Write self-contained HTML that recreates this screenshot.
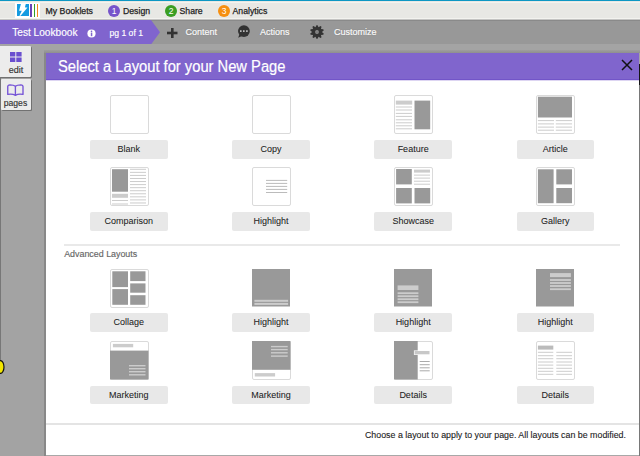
<!DOCTYPE html>
<html><head><meta charset="utf-8"><style>
*{box-sizing:border-box}
html,body{margin:0;padding:0}
body{width:640px;height:456px;overflow:hidden;position:relative;background:#a3a3a3;font-family:"Liberation Sans",sans-serif}
.a{position:absolute}
.th{position:absolute;width:38.5px;height:38.5px}
.btn{position:absolute;width:77.5px;height:18.5px;background:#e8e8e8;border-radius:2px;color:#222;font-size:9px;line-height:19.5px;text-align:center;-webkit-text-stroke:0.05px #222}
.nav{position:absolute;top:5px;font-size:8.7px;color:#222;line-height:12px;-webkit-text-stroke:0.25px #222}
.circ{position:absolute;top:4.8px;width:12.4px;height:12.4px;border-radius:50%;color:#fff;font-size:8.5px;line-height:13.2px;text-align:center;}
.tb{position:absolute;top:26.3px;font-size:9px;color:#fcfcfc;line-height:12px;text-shadow:0 0 1px rgba(60,60,60,.45);-webkit-text-stroke:0.2px #fcfcfc}
</style></head><body>
<div class="a" style="left:0;top:0;width:640px;height:1px;background:#0d97c3"></div>
<div class="a" style="left:0;top:1px;width:640px;height:18px;background:#e8e8e4"></div>
<div class="a" style="left:0;top:2px;width:640px;height:1px;background:#f3f4ef"></div>
<!-- logo -->
<div class="a" style="left:15px;top:3px;width:25px;height:15px;background:#fff"></div>
<div class="a" style="left:17px;top:4px;width:12px;height:12px;background:#149be0"></div>
<svg class="a" style="left:17px;top:4px" width="12" height="12" viewBox="0 0 12 12"><path d="M3.9 0 L8.8 0 L8.1 2.4 L8.2 3.45 L10.5 3.45 L3.6 11.8 L2.4 11.8 L4.8 6.7 L2.1 6.7 Z" fill="#fff"/></svg>
<div class="a" style="left:30.4px;top:4px;width:1.7px;height:12.5px;background:#6a44b8"></div>
<div class="a" style="left:33.5px;top:4px;width:1.7px;height:12.5px;background:#33a02c"></div>
<div class="a" style="left:36.6px;top:4px;width:1.7px;height:12.5px;background:#f5871c"></div>
<div class="nav" style="left:45.6px;top:5.4px;font-size:8.7px">My Booklets</div>
<div class="circ" style="left:107.9px;background:#7654ca">1</div>
<div class="nav" style="left:123px">Design</div>
<div class="circ" style="left:164.8px;background:#3a9e23">2</div>
<div class="nav" style="left:179.5px">Share</div>
<div class="circ" style="left:217.9px;background:#f68f10">3</div>
<div class="nav" style="left:232.5px">Analytics</div>
<!-- toolbar -->
<div class="a" style="left:0;top:18px;width:640px;height:1px;background:#f3f3ef"></div>
<div class="a" style="left:0;top:19px;width:640px;height:1px;background:#c4c4c2"></div>
<div class="a" style="left:0;top:20px;width:640px;height:24px;background:#989898"></div>
<div class="a" style="left:0;top:20px;width:640px;height:1px;background:#8a8a8a"></div>
<div class="a" style="left:0;top:44px;width:640px;height:6px;background:#a4a4a4"></div>
<svg class="a" style="left:0;top:19.5px" width="162" height="24.5" viewBox="0 0 162 24.5"><path d="M0 0 H151 L160 12.25 L151 24.5 H0 Z" fill="#8064ce"/></svg>
<div class="tb" style="left:12.2px;top:27px;font-size:10.15px;color:#fff;text-shadow:none;-webkit-text-stroke:0.15px #fff">Test Lookbook</div>
<svg class="a" style="left:86.8px;top:29.2px" width="9" height="9" viewBox="0 0 9 9"><circle cx="4.5" cy="4.5" r="4.1" fill="#fff"/><rect x="3.8" y="3.6" width="1.5" height="3.6" fill="#8064ce"/><circle cx="4.5" cy="2.4" r="0.8" fill="#8064ce"/></svg>
<div class="tb" style="left:109.5px;top:26.5px;font-size:8.6px;color:#fff;text-shadow:none;-webkit-text-stroke:0.15px #fff">pg 1 of 1</div>
<svg class="a" style="left:167px;top:27.5px" width="11" height="10" viewBox="0 0 11 10"><rect x="4" y="0" width="2.6" height="10" fill="#333"/><rect x="0" y="3.7" width="10.5" height="2.6" fill="#333"/></svg>
<div class="tb" style="left:185.5px">Content</div>
<svg class="a" style="left:237px;top:25px" width="14" height="14" viewBox="0 0 14 14"><circle cx="6.9" cy="6.1" r="5.9" fill="#333"/><path d="M2.5 9 L1.2 12.8 L6 10.5 Z" fill="#333"/><rect x="3.0" y="5.3" width="1.6" height="1.6" fill="#c8c8c8"/><rect x="6.0" y="5.3" width="1.6" height="1.6" fill="#c8c8c8"/><rect x="9.1" y="5.3" width="1.6" height="1.6" fill="#c8c8c8"/></svg>
<div class="tb" style="left:260px">Actions</div>
<svg class="a" style="left:310.4px;top:25.2px" width="14" height="14" viewBox="0 0 14 14"><path d="M5.49 2.34 L6.40 0.13 L7.60 0.13 L8.51 2.34 L8.51 2.34 L10.55 1.09 L11.53 1.79 L10.96 4.12 L10.96 4.12 L13.35 4.30 L13.72 5.45 L11.90 7.00 L11.90 7.00 L13.72 8.55 L13.35 9.70 L10.96 9.88 L10.96 9.88 L11.53 12.21 L10.55 12.91 L8.51 11.66 L8.51 11.66 L7.60 13.87 L6.40 13.87 L5.49 11.66 L5.49 11.66 L3.45 12.91 L2.47 12.21 L3.04 9.88 L3.04 9.88 L0.65 9.70 L0.28 8.55 L2.10 7.00 L2.10 7.00 L0.28 5.45 L0.65 4.30 L3.04 4.12 L3.04 4.12 L2.47 1.79 L3.45 1.09 L5.49 2.34 Z" fill="#333"/><circle cx="7" cy="7" r="1.9" fill="#8f8f8f"/><circle cx="7" cy="7" r="0.6" fill="#555"/></svg>
<div class="tb" style="left:334px">Customize</div>
<!-- left tabs -->
<div class="a" style="left:0;top:77px;width:1px;height:285px;background:#777"></div>
<div class="a" style="left:0;top:45.5px;width:31px;height:31px;background:#ececec;border-radius:0 1px 1px 0;box-shadow:1px 1px 0.5px rgba(0,0,0,.3)"></div>
<svg class="a" style="left:10px;top:52px" width="12" height="10" viewBox="0 0 12 10"><g fill="#6a4fcf"><rect x="0" y="0" width="5.3" height="4.5"/><rect x="6.3" y="0" width="5.3" height="4.5"/><rect x="0" y="5.5" width="5.3" height="4.5"/><rect x="6.3" y="5.5" width="5.3" height="4.5"/></g></svg>
<div class="a" style="left:0.5px;top:64.8px;width:31px;text-align:center;font-size:9px;line-height:11px;color:#333;-webkit-text-stroke:0.15px #333">edit</div>
<div class="a" style="left:1px;top:79px;width:30px;height:31px;background:#ececec;border-radius:1px;box-shadow:1px 1px 0.5px rgba(0,0,0,.3)"></div>
<svg class="a" style="left:7px;top:84px" width="17" height="13" viewBox="0 0 17 13"><path d="M8.4 2.2 C7 1 5 0.8 3 0.8 C1.6 0.9 0.75 1.5 0.75 2.6 V10.4 C3.5 10 6.5 10.2 8.4 11.3 C10.3 10.2 13.3 10 16 10.4 V2.6 C16 1.5 15.2 0.9 13.8 0.8 C11.8 0.8 9.8 1 8.4 2.2 Z M8.4 2.2 V11.3" fill="none" stroke="#7553d6" stroke-width="1.35" stroke-linejoin="round"/></svg>
<div class="a" style="left:0.5px;top:97.5px;width:30px;text-align:center;font-size:8.6px;line-height:11px;color:#333;-webkit-text-stroke:0.15px #333">pages</div>
<svg class="a" style="left:-3.5px;top:359.5px" width="8" height="15" viewBox="0 0 8 15"><ellipse cx="3.5" cy="7" rx="3.5" ry="6.4" fill="#f3e600" stroke="#111" stroke-width="1.2"/></svg>
<!-- modal -->
<div class="a" style="left:44px;top:50px;width:596px;height:3px;background:linear-gradient(#9e9e9e,#8f8f8f)"></div><div class="a" style="left:44px;top:455px;width:596px;height:1px;background:#a8a8a8"></div>
<div class="a" style="left:44px;top:53px;width:2px;height:403px;background:#888"></div>
<div class="a" style="left:639px;top:64px;width:1px;height:21px;background:#151515"></div><div class="a" style="left:639px;top:85px;width:1px;height:371px;background:#787878"></div>
<div class="a" style="left:46px;top:53px;width:593px;height:402px;background:#fff"></div>
<div class="a" style="left:46px;top:53px;width:593px;height:26px;background:#8065cd"></div>
<div class="a" style="left:46px;top:79px;width:593px;height:1px;background:#7255c8"></div><div class="a" style="left:46px;top:80px;width:593px;height:1px;background:#ddd5f2"></div>
<div class="a" style="left:58.2px;top:57.5px;font-size:16px;line-height:18px;color:#fff;transform:scaleX(0.92);transform-origin:0 0;white-space:nowrap;-webkit-text-stroke:0.2px #fff">Select a Layout for your New Page</div>
<svg class="a" style="left:621px;top:59px" width="12" height="12" viewBox="0 0 12 12"><path d="M1 1 L11 11 M11 1 L1 11" stroke="#111" stroke-width="1.5"/></svg>
<div class="th" style="left:110.00px;top:95px;border:1px solid #dadada;border-radius:2px;background:#fff;"><svg width="39" height="39" viewBox="0 0 39 39" style="position:absolute;left:-1px;top:-1px"></svg></div><div class="btn" style="left:90.00px;top:140px">Blank</div><div class="th" style="left:252.13px;top:95px;border:1px solid #dadada;border-radius:2px;background:#fff;"><svg width="39" height="39" viewBox="0 0 39 39" style="position:absolute;left:-1px;top:-1px"></svg></div><div class="btn" style="left:232.20px;top:140px">Copy</div><div class="th" style="left:394.26px;top:95px;border:1px solid #dadada;border-radius:2px;background:#fff;"><svg width="39" height="39" viewBox="0 0 39 39" style="position:absolute;left:-1px;top:-1px"><rect x="1.80" y="5.60" width="16.40" height="4.00" fill="#ccc"/><rect x="1.80" y="11.50" width="16.20" height="1.00" fill="#ccc"/><rect x="1.80" y="14.50" width="16.20" height="1.00" fill="#ccc"/><rect x="1.80" y="17.90" width="16.20" height="1.00" fill="#ccc"/><rect x="1.80" y="20.90" width="16.20" height="1.00" fill="#ccc"/><rect x="1.80" y="24.30" width="16.20" height="1.00" fill="#ccc"/><rect x="1.80" y="27.30" width="16.20" height="1.00" fill="#ccc"/><rect x="1.80" y="30.30" width="16.20" height="1.00" fill="#ccc"/><rect x="1.80" y="33.30" width="16.20" height="1.00" fill="#ccc"/><rect x="20.50" y="5.60" width="15.70" height="28.70" fill="#999"/></svg></div><div class="btn" style="left:374.40px;top:140px">Feature</div><div class="th" style="left:536.39px;top:95px;border:1px solid #dadada;border-radius:2px;background:#fff;"><svg width="39" height="39" viewBox="0 0 39 39" style="position:absolute;left:-1px;top:-1px"><rect x="1.90" y="1.70" width="34.10" height="20.80" fill="#999"/><rect x="1.90" y="25.10" width="16.10" height="1.00" fill="#ccc"/><rect x="19.80" y="25.10" width="16.20" height="1.00" fill="#ccc"/><rect x="1.90" y="28.40" width="16.10" height="1.00" fill="#ccc"/><rect x="19.80" y="28.40" width="16.20" height="1.00" fill="#ccc"/><rect x="1.90" y="31.60" width="16.10" height="1.00" fill="#ccc"/><rect x="19.80" y="31.60" width="16.20" height="1.00" fill="#ccc"/><rect x="1.90" y="34.70" width="16.10" height="1.00" fill="#ccc"/><rect x="19.80" y="34.70" width="16.20" height="1.00" fill="#ccc"/></svg></div><div class="btn" style="left:516.60px;top:140px">Article</div><div class="th" style="left:110.00px;top:167px;border:1px solid #dadada;border-radius:2px;background:#fff;"><svg width="39" height="39" viewBox="0 0 39 39" style="position:absolute;left:-1px;top:-1px"><rect x="2.00" y="2.20" width="16.00" height="22.50" fill="#999"/><rect x="2.00" y="26.80" width="16.00" height="4.00" fill="#ccc"/><rect x="2.00" y="33.00" width="16.00" height="1.00" fill="#ccc"/><rect x="2.00" y="36.50" width="16.00" height="1.00" fill="#ccc"/><rect x="20.00" y="1.80" width="16.00" height="1.00" fill="#ccc"/><rect x="20.00" y="4.86" width="16.00" height="1.00" fill="#ccc"/><rect x="20.00" y="7.92" width="16.00" height="1.00" fill="#ccc"/><rect x="20.00" y="10.98" width="16.00" height="1.00" fill="#ccc"/><rect x="20.00" y="14.04" width="16.00" height="1.00" fill="#ccc"/><rect x="20.00" y="17.10" width="16.00" height="1.00" fill="#ccc"/><rect x="20.00" y="20.16" width="16.00" height="1.00" fill="#ccc"/><rect x="20.00" y="23.22" width="16.00" height="1.00" fill="#ccc"/><rect x="20.00" y="26.28" width="16.00" height="1.00" fill="#ccc"/><rect x="20.00" y="29.34" width="16.00" height="1.00" fill="#ccc"/><rect x="20.00" y="32.40" width="16.00" height="1.00" fill="#ccc"/><rect x="20.00" y="35.46" width="16.00" height="1.00" fill="#ccc"/></svg></div><div class="btn" style="left:90.00px;top:212px">Comparison</div><div class="th" style="left:252.13px;top:167px;border:1px solid #dadada;border-radius:2px;background:#fff;"><svg width="39" height="39" viewBox="0 0 39 39" style="position:absolute;left:-1px;top:-1px"><rect x="14.00" y="12.90" width="21.20" height="1.00" fill="#bbb"/><rect x="14.00" y="15.90" width="21.20" height="1.00" fill="#bbb"/><rect x="14.00" y="18.90" width="21.20" height="1.00" fill="#bbb"/><rect x="14.00" y="21.90" width="21.20" height="1.00" fill="#bbb"/><rect x="14.00" y="25.00" width="21.20" height="1.00" fill="#bbb"/></svg></div><div class="btn" style="left:232.20px;top:212px">Highlight</div><div class="th" style="left:394.26px;top:167px;border:1px solid #dadada;border-radius:2px;background:#fff;"><svg width="39" height="39" viewBox="0 0 39 39" style="position:absolute;left:-1px;top:-1px"><rect x="2.10" y="2.00" width="15.70" height="15.40" fill="#999"/><rect x="20.00" y="2.60" width="16.00" height="3.00" fill="#ccc"/><rect x="20.00" y="7.60" width="16.00" height="1.00" fill="#ccc"/><rect x="20.00" y="10.60" width="16.00" height="1.00" fill="#ccc"/><rect x="20.00" y="13.70" width="16.00" height="1.00" fill="#ccc"/><rect x="20.00" y="16.70" width="16.00" height="1.00" fill="#ccc"/><rect x="2.10" y="21.00" width="15.70" height="15.40" fill="#999"/><rect x="20.50" y="21.00" width="15.70" height="15.40" fill="#999"/></svg></div><div class="btn" style="left:374.40px;top:212px">Showcase</div><div class="th" style="left:536.39px;top:167px;border:1px solid #dadada;border-radius:2px;background:#fff;"><svg width="39" height="39" viewBox="0 0 39 39" style="position:absolute;left:-1px;top:-1px"><rect x="1.90" y="2.30" width="15.70" height="33.90" fill="#999"/><rect x="20.30" y="2.30" width="15.70" height="15.10" fill="#999"/><rect x="20.30" y="21.00" width="15.70" height="15.20" fill="#999"/></svg></div><div class="btn" style="left:516.60px;top:212px">Gallery</div><div class="th" style="left:110.00px;top:269px;border:1px solid #dadada;border-radius:2px;background:#fff;"><svg width="39" height="39" viewBox="0 0 39 39" style="position:absolute;left:-1px;top:-1px"><rect x="2.30" y="2.30" width="15.70" height="15.80" fill="#999"/><rect x="2.30" y="20.10" width="15.70" height="15.70" fill="#999"/><rect x="20.20" y="2.30" width="15.30" height="9.80" fill="#999"/><rect x="20.20" y="14.40" width="15.30" height="9.30" fill="#999"/><rect x="20.20" y="26.20" width="15.30" height="9.60" fill="#999"/></svg></div><div class="btn" style="left:90.00px;top:313.3px">Collage</div><div class="th" style="left:252.13px;top:269px;"><svg width="39" height="39" viewBox="0 0 39 39" style="position:absolute;left:0px;top:0px"><rect x="0.00" y="0.00" width="38.00" height="37.50" fill="#999"/><rect x="2.40" y="30.80" width="33.70" height="2.00" fill="#ccc"/><rect x="2.40" y="33.90" width="33.70" height="2.00" fill="#ccc"/></svg></div><div class="btn" style="left:232.20px;top:313.3px">Highlight</div><div class="th" style="left:394.26px;top:269px;"><svg width="39" height="39" viewBox="0 0 39 39" style="position:absolute;left:0px;top:0px"><rect x="0.00" y="0.00" width="38.00" height="37.50" fill="#999"/><rect x="3.60" y="16.40" width="20.80" height="4.60" fill="#ccc"/><rect x="3.60" y="23.30" width="20.80" height="1.80" fill="#ccc"/><rect x="3.60" y="26.30" width="20.80" height="1.80" fill="#ccc"/><rect x="3.60" y="29.30" width="20.80" height="1.80" fill="#ccc"/><rect x="3.60" y="32.30" width="20.80" height="1.80" fill="#ccc"/></svg></div><div class="btn" style="left:374.40px;top:313.3px">Highlight</div><div class="th" style="left:536.39px;top:269px;"><svg width="39" height="39" viewBox="0 0 39 39" style="position:absolute;left:0px;top:0px"><rect x="0.00" y="0.00" width="38.00" height="37.50" fill="#999"/><rect x="14.00" y="4.10" width="20.90" height="4.00" fill="#ccc"/><rect x="14.00" y="10.10" width="20.90" height="1.80" fill="#ccc"/><rect x="14.00" y="13.10" width="20.90" height="1.80" fill="#ccc"/><rect x="14.00" y="16.10" width="20.90" height="1.80" fill="#ccc"/><rect x="14.00" y="19.30" width="20.90" height="1.80" fill="#ccc"/></svg></div><div class="btn" style="left:516.60px;top:313.3px">Highlight</div><div class="th" style="left:110.00px;top:341px;border:1px solid #dadada;border-radius:2px;background:#fff;"><svg width="39" height="39" viewBox="0 0 39 39" style="position:absolute;left:-1px;top:-1px"><rect x="0.00" y="9.60" width="38.50" height="28.90" fill="#999"/><rect x="2.90" y="2.90" width="20.30" height="3.40" fill="#ccc"/><rect x="19.00" y="24.00" width="16.50" height="1.40" fill="#ccc"/><rect x="19.00" y="27.00" width="16.50" height="1.40" fill="#ccc"/><rect x="19.00" y="30.00" width="16.50" height="1.40" fill="#ccc"/><rect x="19.00" y="33.10" width="16.50" height="1.40" fill="#ccc"/></svg></div><div class="btn" style="left:90.00px;top:385.6px">Marketing</div><div class="th" style="left:252.13px;top:341px;border:1px solid #dadada;border-radius:2px;background:#fff;"><svg width="39" height="39" viewBox="0 0 39 39" style="position:absolute;left:-1px;top:-1px"><rect x="0.00" y="0.00" width="38.50" height="28.80" fill="#999"/><rect x="2.80" y="32.10" width="20.30" height="3.40" fill="#ccc"/><rect x="19.00" y="4.90" width="16.70" height="1.40" fill="#ccc"/><rect x="19.00" y="7.90" width="16.70" height="1.40" fill="#ccc"/><rect x="19.00" y="11.10" width="16.70" height="1.40" fill="#ccc"/><rect x="19.00" y="14.40" width="16.70" height="1.40" fill="#ccc"/></svg></div><div class="btn" style="left:232.20px;top:385.6px">Marketing</div><div class="th" style="left:394.26px;top:341px;border:1px solid #dadada;border-radius:2px;background:#fff;"><svg width="39" height="39" viewBox="0 0 39 39" style="position:absolute;left:-1px;top:-1px"><rect x="0.00" y="0.00" width="23.70" height="38.50" fill="#999"/><rect x="19.9" y="9.4" width="16.1" height="4.5" fill="#fff"/><rect x="20.60" y="10.00" width="14.90" height="3.30" fill="#c8c8c8"/><rect x="25.70" y="20.00" width="10.00" height="1.00" fill="#aaa"/><rect x="25.70" y="23.20" width="10.00" height="1.00" fill="#aaa"/><rect x="25.70" y="26.30" width="10.00" height="1.00" fill="#aaa"/><rect x="25.70" y="29.30" width="10.00" height="1.00" fill="#aaa"/></svg></div><div class="btn" style="left:374.40px;top:385.6px">Details</div><div class="th" style="left:536.39px;top:341px;border:1px solid #dadada;border-radius:2px;background:#fff;"><svg width="39" height="39" viewBox="0 0 39 39" style="position:absolute;left:-1px;top:-1px"><rect x="1.90" y="4.60" width="15.40" height="4.00" fill="#bbb"/><rect x="1.90" y="10.80" width="15.40" height="1.00" fill="#ccc"/><rect x="20.30" y="10.80" width="15.70" height="1.00" fill="#ccc"/><rect x="1.90" y="14.20" width="15.40" height="1.00" fill="#ccc"/><rect x="20.30" y="14.20" width="15.70" height="1.00" fill="#ccc"/><rect x="1.90" y="17.20" width="15.40" height="1.00" fill="#ccc"/><rect x="20.30" y="17.20" width="15.70" height="1.00" fill="#ccc"/><rect x="1.90" y="20.50" width="15.40" height="1.00" fill="#ccc"/><rect x="20.30" y="20.50" width="15.70" height="1.00" fill="#ccc"/><rect x="1.90" y="23.60" width="15.40" height="1.00" fill="#ccc"/><rect x="20.30" y="23.60" width="15.70" height="1.00" fill="#ccc"/><rect x="1.90" y="26.80" width="15.40" height="1.00" fill="#ccc"/><rect x="20.30" y="26.80" width="15.70" height="1.00" fill="#ccc"/><rect x="1.90" y="29.80" width="15.40" height="1.00" fill="#ccc"/><rect x="20.30" y="29.80" width="15.70" height="1.00" fill="#ccc"/><rect x="1.90" y="32.80" width="15.40" height="1.00" fill="#ccc"/><rect x="20.30" y="32.80" width="15.70" height="1.00" fill="#ccc"/></svg></div><div class="btn" style="left:516.60px;top:385.6px">Details</div>
<div class="a" style="left:64px;top:244px;width:556px;height:2px;background:#e9e9e9"></div>
<div class="a" style="left:64.2px;top:248.6px;font-size:8.9px;line-height:11px;color:#666;-webkit-text-stroke:0.15px #666">Advanced Layouts</div>
<div class="a" style="left:46px;top:423px;width:593px;height:1.5px;background:#e4e4e4"></div>
<div class="a" style="left:300px;top:429.6px;width:326px;text-align:right;font-size:8.85px;line-height:11px;color:#222;-webkit-text-stroke:0.1px #222">Choose a layout to apply to your page. All layouts can be modified.</div>
</body></html>
